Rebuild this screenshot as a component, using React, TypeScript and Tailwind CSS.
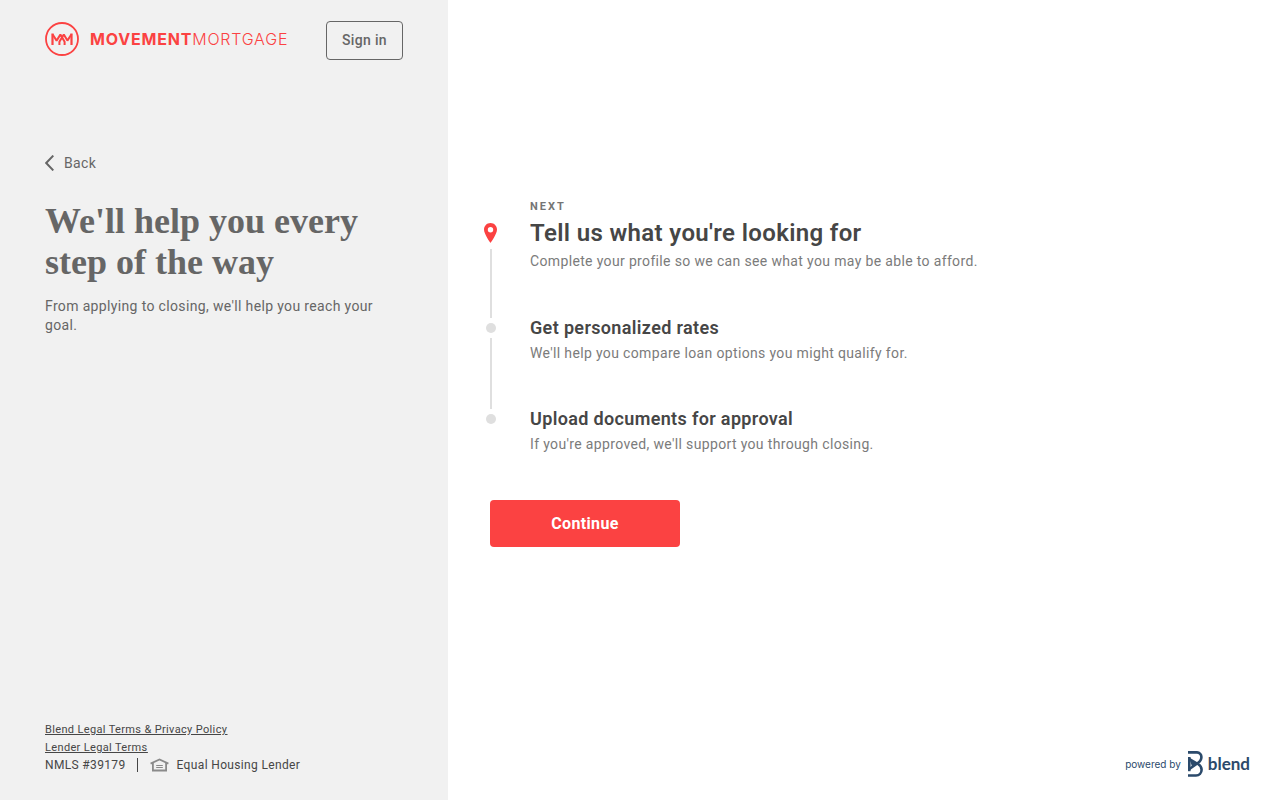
import React from "react";

type Step = { title: string; text: string; eyebrow?: string };

const steps: Step[] = [
  {
    eyebrow: "NEXT",
    title: "Tell us what you're looking for",
    text: "Complete your profile so we can see what you may be able to afford.",
  },
  {
    title: "Get personalized rates",
    text: "We'll help you compare loan options you might qualify for.",
  },
  {
    title: "Upload documents for approval",
    text: "If you're approved, we'll support you through closing.",
  },
];

function MovementLogo() {
  return (
    <div className="flex items-center gap-[11px] pt-px text-[#fb4242]">
      <svg width="34" height="34" viewBox="0 0 34 34" fill="none" stroke="currentColor" aria-hidden="true">
        <circle cx="17" cy="17" r="16" strokeWidth="1.8" />
        <path d="M7.500 11.400V23M26.500 11.400V23" strokeWidth="2.200" />
        <path d="M7.500 12.200L11.600 18.600L15.400 12.600L19.600 19.800V23" strokeWidth="2" strokeLinejoin="bevel" />
        <path d="M14.400 23V19.800L18.800 12.600L22.400 18.600L26.500 12.200" strokeWidth="2" strokeLinejoin="bevel" />
      </svg>
      <span className="flex text-base leading-5 tracking-wider whitespace-nowrap font-[Inter,sans-serif]">
        <span className="font-bold">MOVEMENT</span>
        <span className="font-light">MORTGAGE</span>
      </span>
    </div>
  );
}

function PinIcon() {
  return (
    <svg width="14" height="20" viewBox="0 0 14 20" className="shrink-0" aria-hidden="true">
      <path
        fill="#fb4242"
        fillRule="evenodd"
        d="M6.500 0C2.800 0 0 2.900 0 6.600 0 11.200 6.500 20 6.500 20s6.500-8.800 6.500-13.400C13 2.900 10.200 0 6.500 0Zm0 4a2.700 2.700 0 1 1 0 5.400A2.700 2.700 0 0 1 6.500 4Z"
      />
    </svg>
  );
}

function HousingIcon() {
  return (
    <svg width="19" height="14" viewBox="0 0 19 14" fill="none" stroke="#8a8a8a" aria-hidden="true">
      <path d="M.6 5.600L9.500 1.400L18.400 5.600" strokeWidth="1.800" />
      <path d="M2.900 5V12.500H16.100V5" strokeWidth="1.800" />
      <path d="M6.200 7.500H12.800M6.200 9.500H12.800" strokeWidth="1.200" />
    </svg>
  );
}

function BlendMark() {
  return (
    <svg width="16" height="26" viewBox="0 0 16 26" fill="none" stroke="#2b4a6b" strokeWidth="2.600" aria-hidden="true">
      <path d="M1 1.400H10A4.600 4.600 0 0 1 14.400 6.200C14.400 9.200 12.400 11.200 9.500 13L2.400 18" />
      <path d="M2.400 8L11 13C13.400 14.400 14.600 16.300 14.600 18.800C14.600 22 12.200 24.500 9 24.500H1" />
      <path d="M2.300 6V20.200" />
      <path d="M2.400 8L10 13L5 15.500Z" fill="#2b4a6b" stroke="none" />
    </svg>
  );
}

function StepItem({ step, last }: { step: Step; last: boolean }) {
  const current = Boolean(step.eyebrow);
  return (
    <li className="flex gap-[31px]">
      <div className={current ? "flex w-4 flex-col items-center gap-1.5 pt-[23px]" : "flex w-4 flex-col items-center gap-[5px] pt-[5px]"}>
        {current ? <PinIcon /> : <span className="size-2.5 shrink-0 rounded-full bg-[#dfdfdf]" />}
        {!last && <span className="w-0.5 grow bg-[#dfdfdf]" />}
      </div>
      <div className={current ? "pb-[47px]" : "pb-[46px]"}>
        {step.eyebrow && (
          <p className="mb-[3px] text-[11px] leading-[14px] font-bold tracking-[2px] text-[#757575]">{step.eyebrow}</p>
        )}
        <h2 className={current ? "text-2xl leading-8 font-semibold text-[#464646]" : "text-lg leading-5 font-semibold text-[#464646]"}>
          {step.title}
        </h2>
        <p className={current ? "mt-0.5 leading-5 text-[#7b7b7b]" : "mt-[5px] leading-5 text-[#7b7b7b]"}>{step.text}</p>
      </div>
    </li>
  );
}

export default function App() {
  return (
    <div className="flex min-h-screen bg-white text-sm tracking-wide font-[Roboto,sans-serif] text-[#666666]">
      <aside className="flex w-[35%] shrink-0 flex-col bg-[#f1f1f1] px-[45px] pt-[21px] pb-[27px]">
        <header className="flex items-start justify-between">
          <MovementLogo />
          <button type="button" className="rounded-sm border border-[#666666] px-[15px] py-[9px] leading-[19px] font-medium whitespace-nowrap">
            Sign in
          </button>
        </header>
        <button type="button" className="mt-[93px] flex items-center gap-2.5 self-start leading-5">
          <svg width="9" height="16" viewBox="0 0 9 16" fill="none" stroke="currentColor" strokeWidth="2" aria-hidden="true">
            <path d="M8.300 .6L1.200 8L8.300 15.400" />
          </svg>
          Back
        </button>
        <h1 className="mt-7 text-4xl leading-[41px] font-bold tracking-normal font-['Liberation_Serif',serif]">
          We'll help you every step of the way
        </h1>
        <p className="mt-3.5 leading-[19px]">From applying to closing, we'll help you reach your goal.</p>
        <footer className="mt-auto text-[#464646]">
          <nav className="flex flex-col items-start text-[11px] leading-[18px] underline">
            <a href="#blend-legal">Blend Legal Terms &amp; Privacy Policy</a>
            <a href="#lender-legal">Lender Legal Terms</a>
          </nav>
          <div className="flex items-center text-xs leading-4">
            <span>NMLS #39179</span>
            <span className="mr-3 ml-[11px] h-3.5 w-px bg-[#464646]" />
            <HousingIcon />
            <span className="ml-2">Equal Housing Lender</span>
          </div>
        </footer>
      </aside>
      <main className="flex grow flex-col pt-[200px] pr-[30px] pb-[23px] pl-[35px]">
        <ol>
          {steps.map((step, i) => (
            <StepItem key={step.title} step={step} last={i === steps.length - 1} />
          ))}
        </ol>
        <button type="button" className="ml-[7px] w-[190px] rounded-sm bg-[#fb4242] py-3 text-base leading-[23px] font-bold text-white">
          Continue
        </button>
        <footer className="mt-auto flex items-center justify-end text-[#2b4a6b]">
          <span className="mr-1.5 text-[10px] leading-4 tracking-normal font-[Inter,sans-serif]">powered by</span>
          <BlendMark />
          <span className="ml-[5px] text-[17px] leading-6 font-bold tracking-normal font-[Lato,sans-serif]">blend</span>
        </footer>
      </main>
    </div>
  );
}
